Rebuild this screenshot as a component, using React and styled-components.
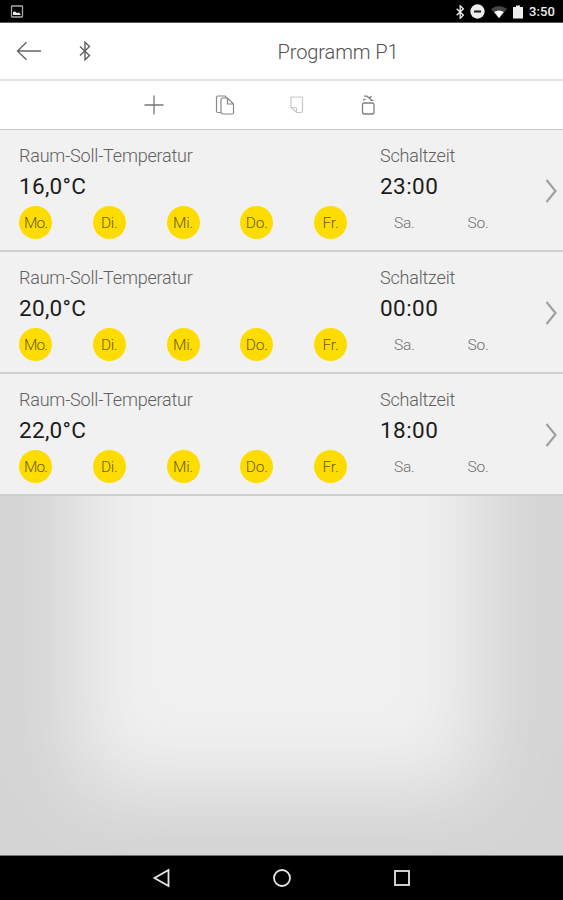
import React from 'react';
import styled, { createGlobalStyle } from 'styled-components';

const GlobalStyle = createGlobalStyle`
  * { box-sizing: border-box; }
  body { margin: 0; background: #000; font-family: Roboto, "Open Sans", sans-serif; }
`;

const Screen = styled.div`
  width: 563px;
  height: 900px;
  display: flex;
  flex-direction: column;
  overflow: hidden;
`;

const StatusBar = styled.div`
  height: 23px;
  flex: none;
  display: flex;
  align-items: center;
  justify-content: space-between;
  padding: 1px 7px 0 10px;
  background: #000;
  border-bottom: 1px solid #555;
`;

const StatusIcons = styled.div`
  display: flex;
  align-items: center;
  gap: 6px;
  svg { display: block; }
`;

const Clock = styled.span`
  width: 27px;
  margin-left: 0;
  color: #eee;
  font-size: 13px;
  font-weight: 500;
  line-height: 20px;
  letter-spacing: 0.1px;
  white-space: nowrap;
`;

const Header = styled.header`
  height: 58px;
  flex: none;
  display: grid;
  grid-template-columns: 57px 56px 450px;
  align-items: center;
  background: #fff;
  border-bottom: 2px solid #e2e2e2;
  svg { display: block; justify-self: center; }
`;

const Title = styled.h1`
  margin: 2px 0 0;
  text-align: center;
  color: #505050;
  font-size: 20px;
  font-weight: 300;
  line-height: 26px;
  letter-spacing: -0.1px;
`;

const Toolbar = styled.div`
  height: 49px;
  flex: none;
  display: grid;
  grid-template-columns: repeat(4, 71.5px);
  padding-left: 118px;
  align-items: center;
  justify-items: center;
  background: #fff;
  border-bottom: 1px solid #c9c9c9;
  svg { display: block; }
`;

const Content = styled.main`
  flex: 1;
  background: #f1f1f1;
  box-shadow: inset -3px 14px 82px 82px #d4d4d4;
`;

const Row = styled.section`
  height: 122px;
  display: grid;
  grid-template-columns: 361px 164px 1fr;
  grid-template-rows: 28px 34px 33px;
  padding: 11px 0 0 19px;
  background: #f1f1f1;
  border-bottom: 2px solid #cecece;
`;

const Label = styled.div`
  color: #606060;
  font-size: 18px;
  font-weight: 300;
  line-height: 30px;
  letter-spacing: -0.2px;
  white-space: nowrap;
`;

const Value = styled.div`
  color: #1c1c1c;
  font-size: 22.5px;
  font-weight: 400;
  line-height: 34px;
  letter-spacing: ${(p) => p.$tracking};
  white-space: nowrap;
`;

const Chevron = styled.div`
  grid-column: 3;
  grid-row: 1 / 4;
  display: flex;
  align-items: flex-start;
  justify-content: center;
  padding: 37px 5px 0 0;
`;

const Days = styled.div`
  grid-column: 1 / 3;
  grid-row: 3;
  display: grid;
  grid-template-columns: repeat(7, 73.75px);
  padding-top: 3px;
`;

const Day = styled.span`
  width: 33px;
  height: 33px;
  border-radius: 50%;
  display: flex;
  align-items: center;
  justify-content: center;
  padding-top: 1px;
  background: ${(p) => (p.$active ? '#ffdc00' : 'transparent')};
  color: ${(p) => (p.$active ? '#6a5c12' : '#707070')};
  font-size: 15.5px;
  font-weight: 300;
  line-height: 20px;
  letter-spacing: ${(p) => (p.$wide ? '-0.9px' : '-0.2px')};
`;

const NavBar = styled.nav`
  height: 45px;
  flex: none;
  display: grid;
  grid-template-columns: repeat(3, 120px);
  justify-content: center;
  align-items: center;
  justify-items: center;
  background: #000;
  border-top: 1px solid #777;
  svg { display: block; }
`;

const DAYS = ['Mo.', 'Di.', 'Mi.', 'Do.', 'Fr.', 'Sa.', 'So.'];
const ENTRIES = [
  { temp: '16,0°C', time: '23:00' },
  { temp: '20,0°C', time: '00:00' },
  { temp: '22,0°C', time: '18:00' },
];

function Bluetooth({ size, width, color }) {
  return (
    <svg width={size * 0.6} height={size} viewBox="0 0 12 20" fill="none" stroke={color} strokeWidth={width}>
      <path d="M1 5.5 L10.5 14.5 L6 18.8 V1.2 L10.5 5.5 L1 14.5" />
    </svg>
  );
}

function ProgramRow({ temp, time }) {
  return (
    <Row>
      <Label>Raum-Soll-Temperatur</Label>
      <Label>Schaltzeit</Label>
      <Value $tracking="0.3px">{temp}</Value>
      <Value $tracking="0.45px">{time}</Value>
      <Chevron>
        <svg width="14" height="26" viewBox="0 0 14 26" fill="none" stroke="#a0a0a0" strokeWidth="2.2">
          <path d="M2.5 2 L11.5 13 L2.5 24" />
        </svg>
      </Chevron>
      <Days>
        {DAYS.map((d, i) => (
          <Day key={d} $active={i < 5} $wide={i === 0}>{d}</Day>
        ))}
      </Days>
    </Row>
  );
}

export default function App() {
  return (
    <Screen>
      <GlobalStyle />
      <StatusBar>
        <svg width="14" height="13" viewBox="0 0 14 13">
          <rect x="1.5" y="1" width="11" height="11" rx="0.5" fill="none" stroke="#aaa" strokeWidth="1.3" />
          <path d="M3 10 V7 L5 6.5 L7 8 L9 7.5 L11 10 Z" fill="#eee" />
        </svg>
        <StatusIcons>
          <Bluetooth size={14} width={2} color="#e5e5e5" />
          <svg width="15" height="15" viewBox="0 0 14 14">
            <circle cx="7" cy="7" r="6.7" fill="#eee" />
            <path d="M3.7 7 H10.3" stroke="#222" strokeWidth="2" />
          </svg>
          <svg width="16" height="14" viewBox="6 0 16 14">
            <path d="M6 4 Q14 -2 22 4 L14 13.5 Z" fill="#444" />
            <path d="M9.2 7 Q14 4 18.8 7 L14 13 Z" fill="#fff" />
          </svg>
          <svg width="10" height="14" viewBox="0 0 10 14">
            <path d="M0 2 H3 V0.5 H7 V2 H10 V13.5 H0 Z" fill="#eee" />
          </svg>
          <Clock>3:50</Clock>
        </StatusIcons>
      </StatusBar>
      <Header>
        <svg width="26" height="20" viewBox="0 0 26 20" fill="none" stroke="#666" strokeWidth="1.4">
          <path d="M25 10 H1.5 M10.5 1.2 L1.5 10 L10.5 18.8" />
        </svg>
        <Bluetooth size={20} width={1.4} color="#606060" />
        <Title>Programm P1</Title>
      </Header>
      <Toolbar>
        <svg width="20" height="20" viewBox="0 0 20 20" stroke="#777" strokeWidth="1.3">
          <path d="M10 0.5 V19.5 M0.5 10 H19.5" />
        </svg>
        <svg width="20" height="20" viewBox="0 0 20 20" fill="none" stroke="#888" strokeWidth="1.2">
          <path d="M6 17.5 H3 Q1.5 17.5 1.5 16 V2.5 Q1.5 1 3 1 H10 L12 3" />
          <path d="M7.5 3 H12.5 L18.5 9 V17.5 Q18.5 19 17 19 H7.5 Q6 19 6 17.5 V4.5 Q6 3 7.5 3 Z M12.5 3 V9 H18.5" />
        </svg>
        <svg width="20" height="20" viewBox="0 0 20 20" fill="none" stroke="#c6c6c6" strokeWidth="1.2">
          <path d="M5.5 2 H14.5 Q15.5 2 15.5 3.5 V16 Q15.5 17.5 14 17.5 H9.5 L4 12.5 V3 Q4 2 5.5 2 Z M4 12.5 H8.5 Q9.5 12.5 9.5 13.5 V17.5" />
        </svg>
        <svg width="20" height="20" viewBox="0 0 20 20" fill="none" stroke="#808080" strokeWidth="1.3">
          <rect x="4.5" y="8" width="11.5" height="11" rx="2" />
          <path d="M5 5.2 L7.5 4.2 M6 1.2 L9 1.2 L13.5 5 M11.5 3.2 L13.5 1 M12.5 5.3 H15.5" />
        </svg>
      </Toolbar>
      <Content>
        {ENTRIES.map((e) => (
          <ProgramRow key={e.time} {...e} />
        ))}
      </Content>
      <NavBar>
        <svg width="20" height="20" viewBox="0 0 20 20" fill="none" stroke="#e5e5e5" strokeWidth="1.8">
          <path d="M16.5 2 V18 L2.5 10 Z" />
        </svg>
        <svg width="20" height="20" viewBox="0 0 20 20" fill="none" stroke="#e5e5e5" strokeWidth="1.8">
          <circle cx="10" cy="10" r="8" />
        </svg>
        <svg width="20" height="20" viewBox="0 0 20 20" fill="none" stroke="#e5e5e5" strokeWidth="1.8">
          <rect x="3" y="3" width="14" height="14" />
        </svg>
      </NavBar>
    </Screen>
  );
}
